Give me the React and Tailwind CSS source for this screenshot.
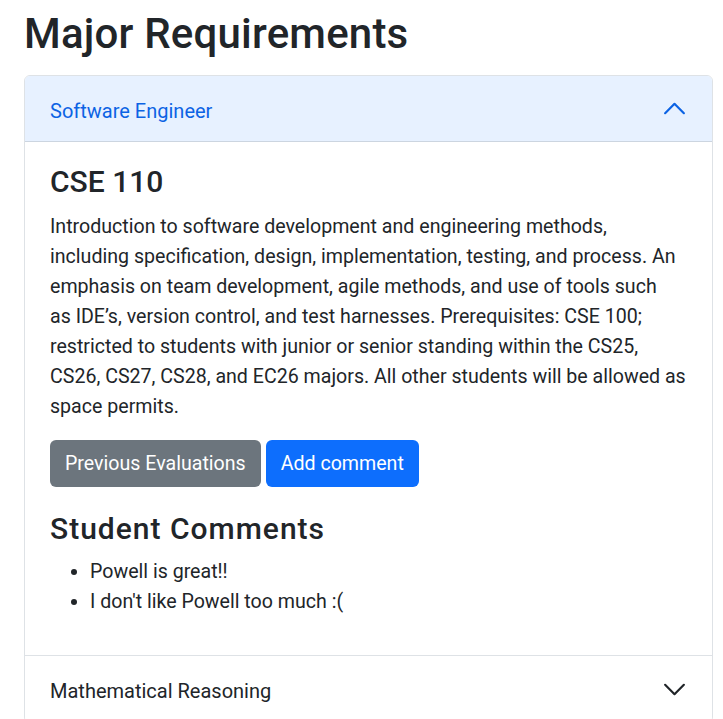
import { useState } from 'react';

const FONT = { fontFamily: 'Roboto, "Noto Sans", sans-serif' };

function Chevron({ open }) {
  return (
    <svg
      viewBox="0 0 16 16"
      className={open ? 'w-[25px] h-[25px] rotate-180' : 'w-[25px] h-[25px]'}
      fill="none"
      stroke={open ? '#0c63e4' : '#212529'}
      strokeWidth="1.4"
      strokeLinecap="round"
      strokeLinejoin="round"
    >
      <polyline points="2,5 8,11 14,5" />
    </svg>
  );
}

const lines = [
  'Introduction to software development and engineering methods,',
  'including specification, design, implementation, testing, and process. An',
  'emphasis on team development, agile methods, and use of tools such',
  'as IDE’s, version control, and test harnesses. Prerequisites: CSE 100;',
  'restricted to students with junior or senior standing within the CS25,',
  'CS26, CS27, CS28, and EC26 majors. All other students will be allowed as',
  'space permits.',
];

export default function App() {
  const [open, setOpen] = useState('se');

  return (
    <div className="min-h-screen bg-white pl-[24px] pr-[10px] text-[#212529]" style={FONT}>
      <h1 className="pt-[9px] mb-[17px] text-[42px] leading-[49px] font-medium tracking-[0.2px]">Major Requirements</h1>

      <div className="border border-[#dee2e6] rounded-[6px] overflow-hidden">
        {/* SOFTWARE ENGINEER */}
        <button
          onClick={() => setOpen(open === 'se' ? '' : 'se')}
          className={
            open === 'se'
              ? 'w-full h-[66px] flex items-center justify-between px-[25px] bg-[#e7f1ff] text-[#0c63e4] text-[20px] border-b border-[#ccd5e0]'
              : 'w-full h-[66px] flex items-center justify-between px-[25px] bg-white text-[#212529] text-[20px]'
          }
        >
          <span className="pt-[4px]">Software Engineer</span>
          <Chevron open={open === 'se'} />
        </button>

        {open === 'se' && (
          <div className="px-[25px] pt-[19px] pb-[20px]">
            <h3 className="text-[30px] leading-[42px] font-medium mb-[9px]">CSE 110</h3>
            <p className="text-[19.6px] leading-[30px] mb-[18px] whitespace-nowrap">
              {lines.map((l, i) => (
                <span key={i} className="block">{l}</span>
              ))}
            </p>
            <div className="flex gap-[5px]">
              <button className="h-[47px] px-[15px] rounded-[6px] bg-[#6c757d] text-white text-[19.6px]">
                Previous Evaluations
              </button>
              <button className="h-[47px] px-[15px] rounded-[6px] bg-[#0d6efd] text-white text-[19.6px]">
                Add comment
              </button>
            </div>
            <h3 className="mt-[21px] text-[30px] leading-[42px] font-medium mb-[7px] tracking-[1px]">Student Comments</h3>
            <ul className="list-disc pl-[40px] text-[19.6px] leading-[30px] mb-[18px]">
              <li>Powell is great!!</li>
              <li>I don't like Powell too much :(</li>
            </ul>
          </div>
        )}

        {/* MATHEMATICAL REASONING */}
        <div className="border-t border-[#dee2e6]">
          <button
            onClick={() => setOpen(open === 'mr' ? '' : 'mr')}
            className="w-full h-[66px] flex items-center justify-between px-[25px] bg-white text-[#212529] text-[20px]"
          >
            <span className="pt-[4px]">Mathematical Reasoning</span>
            <Chevron open={open === 'mr'} />
          </button>
        </div>
      </div>
    </div>
  );
}
